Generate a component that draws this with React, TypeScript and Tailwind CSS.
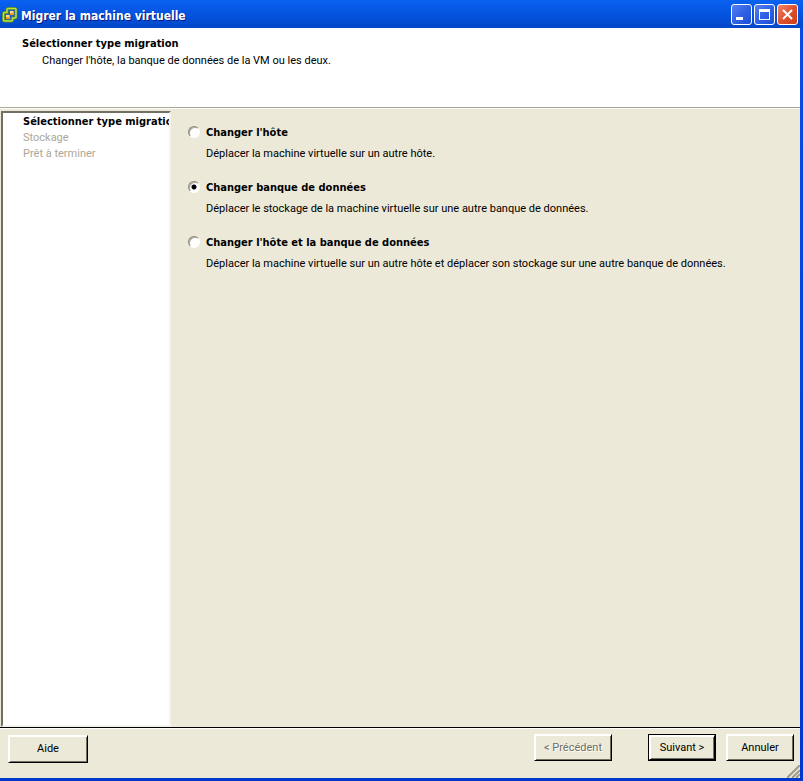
import { useState } from "react";

const OPTIONS = [
  { id: "host", title: "Changer l'hôte", text: "Déplacer la machine virtuelle sur un autre hôte." },
  {
    id: "datastore",
    title: "Changer banque de données",
    text: "Déplacer le stockage de la machine virtuelle sur une autre banque de données.",
  },
  {
    id: "both",
    title: "Changer l'hôte et la banque de données",
    text: "Déplacer la machine virtuelle sur un autre hôte et déplacer son stockage sur une autre banque de données.",
  },
];

const RAISED =
  "border border-t-white border-l-white border-r-black border-b-black shadow-[inset_1px_1px_#fff,inset_-1px_-1px_#716f64]";
const BOLD = "font-['DejaVu_Sans_Condensed','DejaVu_Sans',sans-serif] font-bold";
const ICON_OUTLINE = "M6 1.500h7q1 0 1 1v7.500q0 1-1 1h-2.500V13q0 1-1 1H2.500q-1 0-1-1V6.500q0-1 1-1H5v-3q0-1 1-1z";

function AppIcon() {
  return (
    <svg width="16" height="16" viewBox="0 0 16 16" aria-hidden="true">
      <path d={ICON_OUTLINE} fill="#2a5fc0" stroke="#4a8420" strokeWidth="3" />
      <path d={ICON_OUTLINE} fill="none" stroke="#b9e04a" strokeWidth="1.500" />
      <path d="M8 4h4v4H8zM4 8h4v4H4z" fill="#f59a1c" />
      <path d="M8 4h3v2H8zM4 8h3v2H4z" fill="#ffd98a" />
    </svg>
  );
}

function CaptionButton({ label, close, children }: { label: string; close?: boolean; children: React.ReactNode }) {
  return (
    <button
      aria-label={label}
      className={`flex size-[21px] items-center justify-center rounded-[3px] border border-white ${
        close
          ? "bg-linear-to-br from-[#ee8668] via-[#e0502c] to-[#c8401a]"
          : "bg-linear-to-br from-[#5580f0] via-[#2f62e4] to-[#1c4fd8]"
      }`}
    >
      <svg width="19" height="19" viewBox="0 0 19 19" aria-hidden="true">
        {children}
      </svg>
    </button>
  );
}

export default function App() {
  const [choice, setChoice] = useState("datastore");
  return (
    <div className="flex h-screen flex-col bg-linear-to-b from-[#0a4be8] to-[#0038cc] pr-[3px] pb-[3px] font-[Roboto,'DejaVu_Sans',sans-serif] text-[11px] leading-4 text-black">
      <header className="-mr-[3px] flex h-7 shrink-0 items-center bg-linear-to-b from-[#0a62f0] via-[#0553e0] to-[#0347c8] pt-[1px] pr-[5px] pl-[2px]">
        <AppIcon />
        <h1 className={`mt-[2px] ml-[3px] flex-1 text-[12px] text-white [text-shadow:1px_1px_#0a1883] ${BOLD}`}>
          Migrer la machine virtuelle
        </h1>
        <div className="flex gap-[2px]">
          <CaptionButton label="Réduire">
            <path d="M4 12h7v3H4z" fill="#fff" />
          </CaptionButton>
          <CaptionButton label="Agrandir">
            <path d="M4 4h11v11H4zM5 7v7h9V7z" fill="#fff" fillRule="evenodd" />
          </CaptionButton>
          <CaptionButton label="Fermer" close>
            <path d="M5 5l9 9M14 5l-9 9" stroke="#fff" strokeWidth="2" />
          </CaptionButton>
        </div>
      </header>
      <section className="h-20 shrink-0 border-b border-[#aca899] bg-white pt-2 pl-[22px]">
        <h2 className={BOLD}>Sélectionner type migration</h2>
        <p className="pt-[1px] pl-5">Changer l'hôte, la banque de données de la VM ou les deux.</p>
      </section>
      <main className="flex min-h-0 flex-1 border-t border-b border-t-white border-b-black bg-[#ece9d8] pt-[2px]">
        <nav className="ml-[1px] w-[170px] shrink-0 overflow-hidden border-2 border-t-[#716f64] border-r-[#f5f4ec] border-b-[#f5f4ec] border-l-[#716f64] bg-white pt-[1px] pl-5 whitespace-nowrap text-[#aca899]">
          <div className={`text-black ${BOLD}`}>Sélectionner type migration</div>
          <div>Stockage</div>
          <div>Prêt à terminer</div>
        </nav>
        <form className="flex flex-1 flex-col gap-[18px] pt-[14px] pl-[17px]">
          {OPTIONS.map((o) => (
            <div key={o.id} className="flex gap-[6px]">
              <input
                type="radio"
                name="type"
                id={o.id}
                checked={choice === o.id}
                onChange={() => setChoice(o.id)}
                className="mt-[1px] size-3 shrink-0 appearance-none rounded-full border border-t-[#8b8878] border-r-white border-b-white border-l-[#8b8878] bg-white shadow-[inset_1px_1px_#aca899] checked:bg-[radial-gradient(circle,#000_2px,#fff_3px)]"
              />
              <div>
                <label htmlFor={o.id} className={`block ${BOLD}`}>
                  {o.title}
                </label>
                <p className="pt-[5px]">{o.text}</p>
              </div>
            </div>
          ))}
        </form>
      </main>
      <footer className="relative flex h-[50px] shrink-0 items-start border-t border-white bg-[#ece9d8] px-[6px] pt-[5px]">
        <button className={`mt-[1px] ml-[2px] h-7 w-20 ${RAISED}`}>Aide</button>
        <button disabled className={`ml-auto h-[27px] w-[78px] text-[#716f64] [text-shadow:1px_1px_#fff] ${RAISED}`}>
          &lt; Précédent
        </button>
        <button className="ml-9 h-[27px] w-[68px] border border-black">
          <span className={`flex h-full items-center justify-center ${RAISED}`}>Suivant &gt;</span>
        </button>
        <button className={`ml-[10px] h-[27px] w-[68px] ${RAISED}`}>Annuler</button>
        <svg className="absolute right-0 bottom-0" width="13" height="13" viewBox="0 0 13 13" aria-hidden="true">
          <path d="M-1 13L13-1M4 13l9-9M8 13l5-5" stroke="#fff" strokeWidth="1" />
          <path d="M0 13L13 0M5 13l8-8M9 13l4-4" stroke="#9d9a86" strokeWidth="2" />
        </svg>
      </footer>
    </div>
  );
}
